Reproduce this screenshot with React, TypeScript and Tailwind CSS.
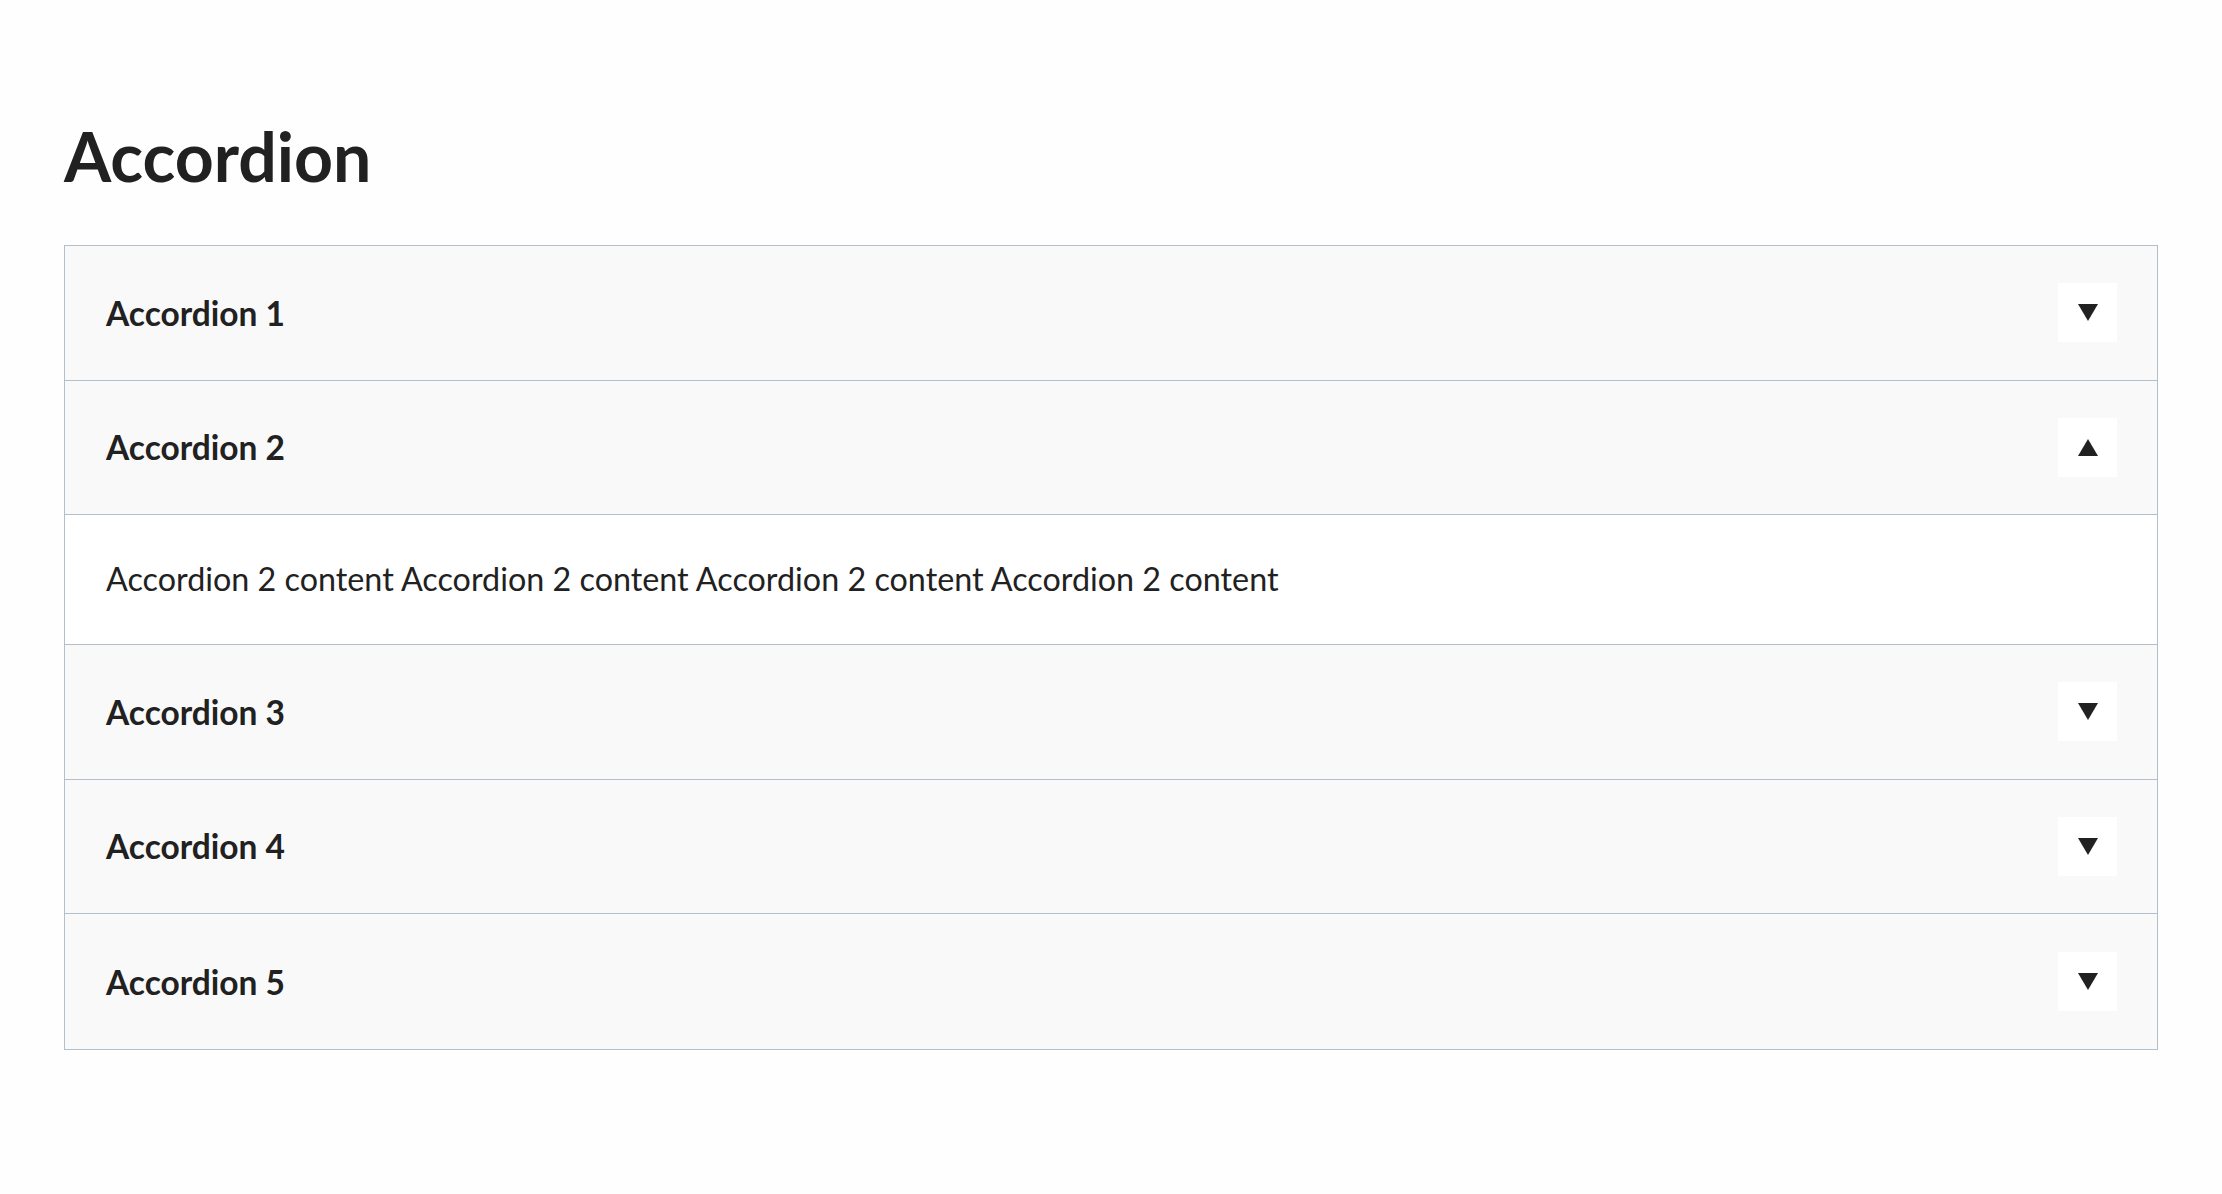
import { useState } from "react";

const items = [1, 2, 3, 4, 5];

function Triangle({ up }: { up: boolean }) {
  return (
    <svg width="20" height="17" viewBox="0 0 20 17" className="block">
      {up ? <polygon points="10,0 20,17 0,17" fill="#212121" /> : <polygon points="0,0 20,0 10,17" fill="#212121" />}
    </svg>
  );
}

export default function App() {
  const [open, setOpen] = useState<number | null>(2);

  return (
    <div className="min-h-screen bg-[#fefefe] px-[64px] pt-[122px] font-['Lato',sans-serif] text-[#212121]">
      <h1 className="text-[68px] font-bold leading-none">Accordion</h1>
      <div className="mt-[55px] border border-[#b3bfcc]">
        {items.map((n, i) => {
          const isOpen = open === n;
          const last = i === items.length - 1;
          return (
            <div key={n}>
              <button
                type="button"
                onClick={() => setOpen(isOpen ? null : n)}
                className={
                  "flex h-[134.6px] w-full items-center justify-between bg-[#f9f9fa] pl-[41px] pr-[40px] text-left" +
                  (!last || isOpen ? " border-b border-[#b3bfcc]" : "")
                }
              >
                <span className="text-[33.5px] font-bold">Accordion {n}</span>
                <span className="flex h-[59px] w-[59px] items-center justify-center bg-white">
                  <Triangle up={isOpen} />
                </span>
              </button>
              {isOpen && (
                <div
                  className={
                    "flex h-[130px] items-center bg-white pl-[41px] text-[32.3px]" +
                    (!last ? " border-b border-[#b3bfcc]" : "")
                  }
                >
                  Accordion {n} content Accordion {n} content Accordion {n} content Accordion {n} content
                </div>
              )}
            </div>
          );
        })}
      </div>
    </div>
  );
}
